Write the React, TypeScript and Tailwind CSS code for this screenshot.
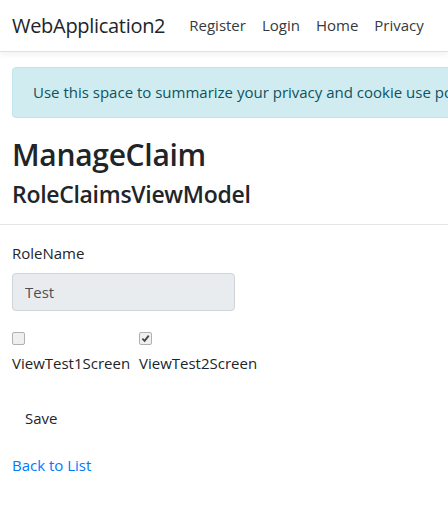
import React from 'react';

const font = { fontFamily: '"Open Sans", "Noto Sans", sans-serif' };

const Box = ({ checked }: { checked?: boolean }) => (
  <span className="flex h-[13px] w-[13px] items-center justify-center rounded-[2px] border border-[#b0b0b0] bg-[#efefef]">
    {checked && (
      <svg width="9" height="9" viewBox="0 0 10 10">
        <path d="M1.5 5.2 L4 7.6 L8.6 1.8" fill="none" stroke="#444" strokeWidth="2" />
      </svg>
    )}
  </span>
);

const App = () => {
  return (
    <div className="h-[513px] w-[448px] overflow-hidden bg-white text-[15px] text-[#212529]" style={font}>
      <header className="flex h-[52px] items-center border-b border-[#dee2e6] px-3 shadow-[0_3px_6px_rgba(0,0,0,0.05)]">
        <span className="mr-[24px] text-[20px] text-[#212529] tracking-[-0.3px]">WebApplication2</span>
        <nav className="flex gap-[16px] text-[15px] text-[#343a40]">
          <span>Register</span>
          <span>Login</span>
          <span>Home</span>
          <span>Privacy</span>
        </nav>
      </header>

      <div className="mx-3 mt-[15px] flex h-[51px] w-[760px] items-center whitespace-nowrap rounded border border-[#bee5eb] bg-[#d1ecf1] px-5 text-[15px] text-[#0c5460]">
        Use this space to summarize your privacy and cookie use policy. <span className="ml-1 text-[#062c33]">Learn More</span>.
      </div>

      <main className="px-3">
        <h1 className="mt-[17px] text-[30px] leading-[40px] font-semibold tracking-[-0.3px]">ManageClaim</h1>
        <h4 className="mt-[4px] text-[23px] leading-[30px] font-semibold tracking-[-0.3px]">RoleClaimsViewModel</h4>
        <hr className="-mx-3 mt-[15px] border-[#e5e5e5]" />

        <div className="mt-[18px] flex flex-col">
          <label className="leading-[21px]">RoleName</label>
          <div className="mt-[9px] flex h-[38px] w-[223px] items-center rounded border border-[#ced4da] bg-[#e9ecef] px-3 text-[#495057]">
            Test
          </div>
        </div>

        <div className="mt-[21px] flex gap-[9px]">
          <div className="flex w-[118px] flex-col">
            <Box />
            <span className="mt-[8px] leading-[21px] whitespace-nowrap">ViewTest1Screen</span>
          </div>
          <div className="flex flex-col">
            <Box checked />
            <span className="mt-[8px] leading-[21px] whitespace-nowrap">ViewTest2Screen</span>
          </div>
        </div>

        <div className="mt-[34px] px-[13px] leading-[21px]">Save</div>

        <div className="mt-[26px] text-[#007bff] leading-[21px]">Back to List</div>
      </main>
    </div>
  );
};

export default App;
